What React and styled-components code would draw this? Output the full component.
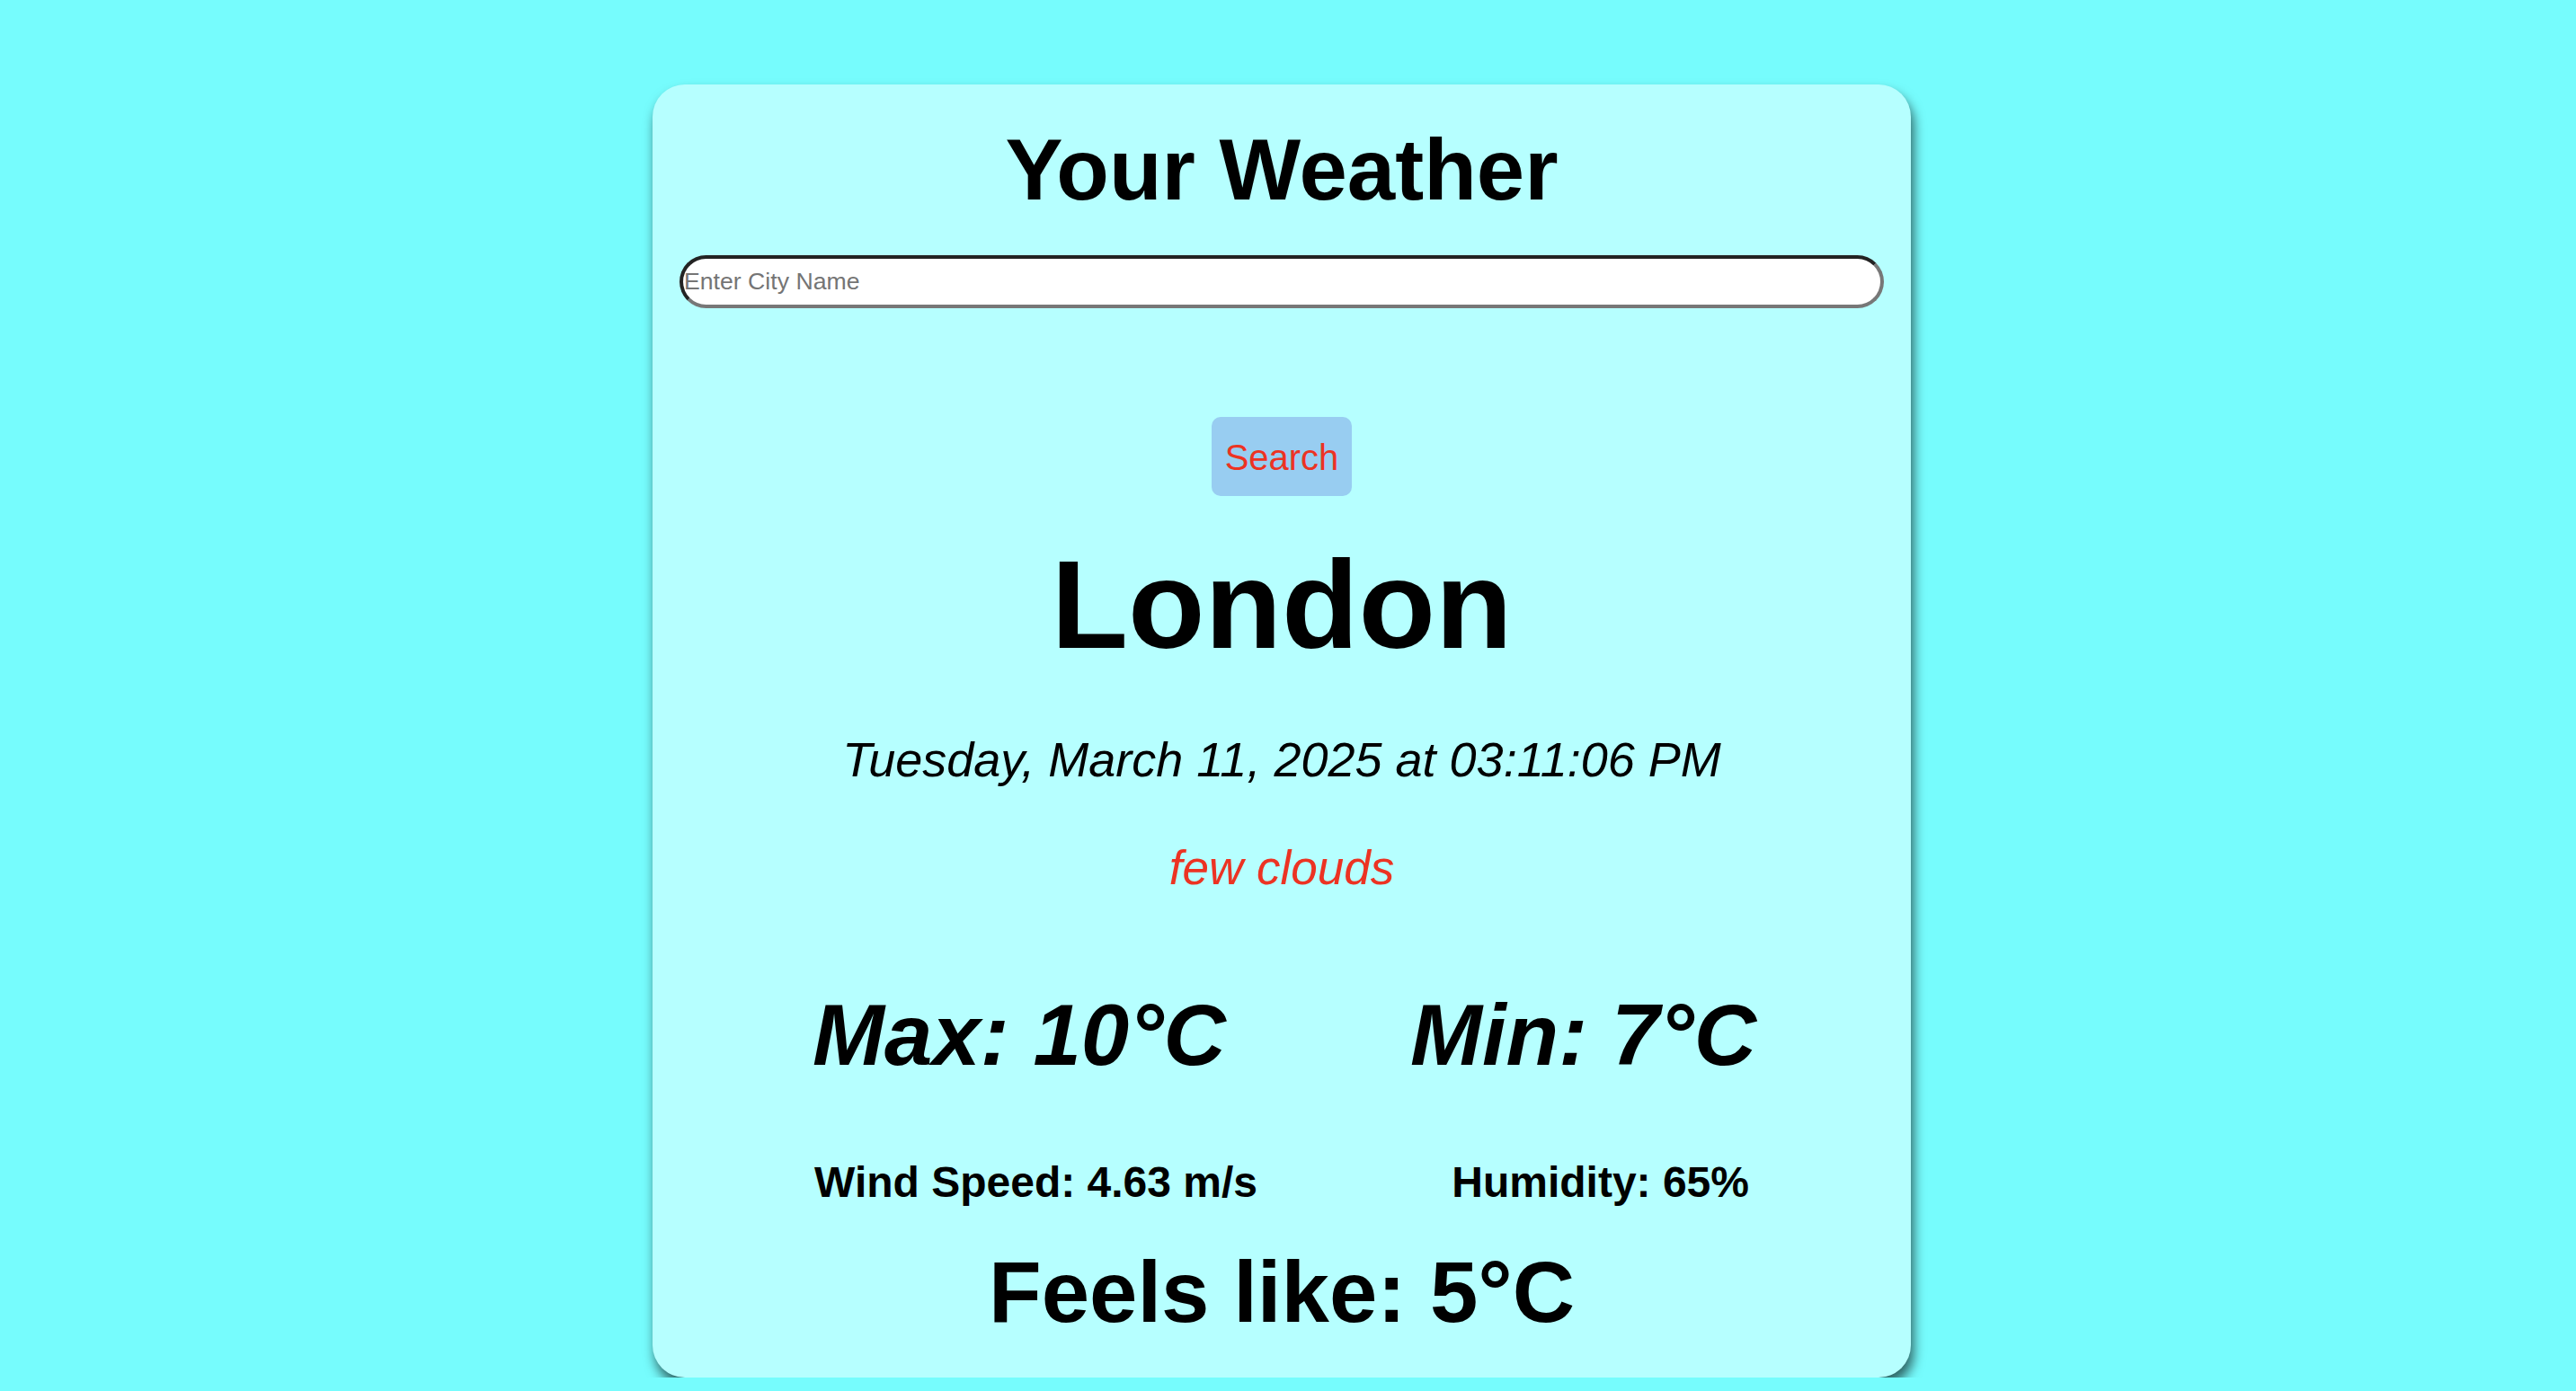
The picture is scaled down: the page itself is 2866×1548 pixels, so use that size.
import React, { useState } from 'react';
import styled, { createGlobalStyle } from 'styled-components';

const GlobalStyle = createGlobalStyle`
  html, body {
    margin: 0;
    padding: 0;
    background-color: #76fcfd;
    font-family: "Liberation Sans", Arial, sans-serif;
  }
`;

const Page = styled.div`
  display: flex;
  justify-content: center;
  padding: 94px 14px 0 0;
`;

const Card = styled.div`
  width: 1400px;
  box-sizing: border-box;
  padding: 40px 30px 40px;
  background-color: #b6ffff;
  border-radius: 36px;
  box-shadow: 3px 9px 13px rgba(0, 0, 0, 0.62);
  display: flex;
  flex-direction: column;
  align-items: center;
  text-align: center;
  color: #000;
`;

const Title = styled.h1`
  margin: 0;
  font-size: 96px;
  line-height: 1.15;
  font-weight: bold;
`;

const SearchInput = styled.input`
  margin-top: 40px;
  width: 100%;
  height: 59px;
  box-sizing: border-box;
  padding: 0 1px;
  border: 4px solid;
  border-color: #232323 #777 #777 #232323;
  border-radius: 30px;
  background: #fff;
  font-family: "Liberation Sans", Arial, sans-serif;
  font-size: 26.67px;
  outline: none;

  &::placeholder {
    color: #757575;
  }
`;

const SearchButton = styled.button`
  margin-top: 121px;
  padding: 22px 15px 20px;
  border: none;
  border-radius: 10px;
  background-color: #98cdf1;
  color: #ec3323;
  font-family: "Liberation Sans", Arial, sans-serif;
  font-size: 40px;
  line-height: 1.15;
  cursor: pointer;
`;

const City = styled.h2`
  margin: 40px 0 0;
  font-size: 140px;
  line-height: 1.15;
  font-weight: bold;
`;

const DateText = styled.p`
  margin: 61px 0 0;
  font-size: 54px;
  line-height: 1.15;
  font-style: italic;
`;

const Description = styled.p`
  margin: 60px 0 0;
  font-size: 53px;
  line-height: 1.15;
  font-style: italic;
  color: #ec3323;
`;

const StatRow = styled.div`
  display: flex;
  justify-content: space-between;
  width: ${(p) => p.$width}px;
  margin-top: ${(p) => p.$gap}px;
  margin-left: ${(p) => p.$shift || 0}px;
`;

const Temp = styled.span`
  font-size: 96px;
  line-height: 1.15;
  font-weight: bold;
  font-style: italic;
`;

const Detail = styled.span`
  font-size: 48px;
  line-height: 1.15;
  font-weight: bold;
`;

const FeelsLike = styled.h2`
  margin: 40px 0 0;
  font-size: 96px;
  line-height: 1.15;
  font-weight: bold;
`;

const weather = {
  name: 'London',
  date: 'Tuesday, March 11, 2025 at 03:11:06 PM',
  description: 'few clouds',
  max: 10,
  min: 7,
  wind: 4.63,
  humidity: 65,
  feelsLike: 5,
};

const App = () => {
  const [city, setCity] = useState('');

  return (
    <>
      <GlobalStyle />
      <Page>
        <Card>
          <Title>Your Weather</Title>
          <SearchInput
            type="text"
            placeholder="Enter City Name"
            value={city}
            onChange={(e) => setCity(e.target.value)}
          />
          <SearchButton>Search</SearchButton>

          <City>{weather.name}</City>
          <DateText>{weather.date}</DateText>
          <Description>{weather.description}</Description>

          <StatRow $gap={100} $width={1050} $shift={6}>
            <Temp>Max: {weather.max}°C</Temp>
            <Temp>Min: {weather.min}°C</Temp>
          </StatRow>
          <StatRow $gap={80} $width={1040}>
            <Detail>Wind Speed: {weather.wind} m/s</Detail>
            <Detail>Humidity: {weather.humidity}%</Detail>
          </StatRow>

          <FeelsLike>Feels like: {weather.feelsLike}°C</FeelsLike>
        </Card>
      </Page>
    </>
  );
};

export default App;
